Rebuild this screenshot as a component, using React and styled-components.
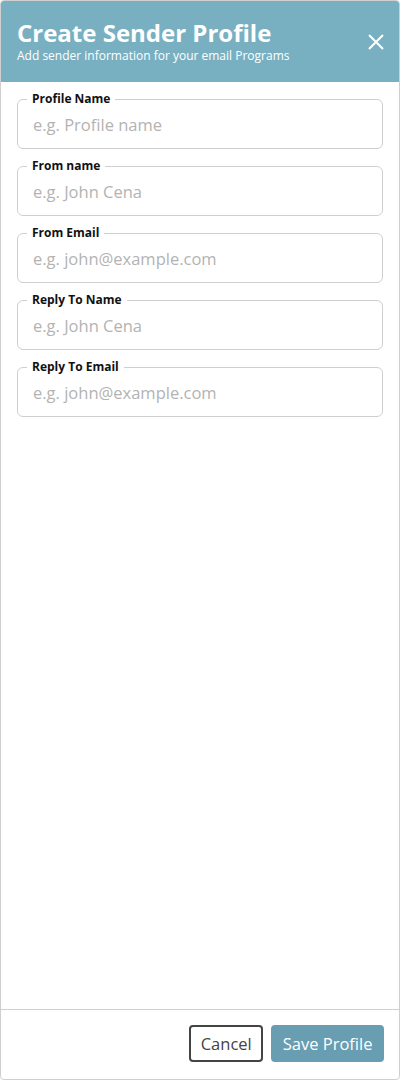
import React from "react";
import styled, { createGlobalStyle } from "styled-components";

const fields = [
  { label: "Profile Name", placeholder: "e.g. Profile name" },
  { label: "From name", placeholder: "e.g. John Cena" },
  { label: "From Email", placeholder: "e.g. john@example.com" },
  { label: "Reply To Name", placeholder: "e.g. John Cena" },
  { label: "Reply To Email", placeholder: "e.g. john@example.com" },
];

function App() {
  return (
    <>
      <GlobalStyle />
      <Panel>
        <Header>
          <div>
            <Title>Create Sender Profile</Title>
            <Subtitle>Add sender information for your email Programs</Subtitle>
          </div>
          <CloseButton aria-label="Close">
            <svg width="16" height="16" viewBox="0 0 16 16">
              <path d="M1 1L15 15M15 1L1 15" stroke="#fff" strokeWidth="2" />
            </svg>
          </CloseButton>
        </Header>
        <Body>
          {fields.map((item) => (
            <Field key={item.label}>
              <Legend>{item.label}</Legend>
              <Input placeholder={item.placeholder} />
            </Field>
          ))}
        </Body>
        <Footer>
          <Button>Cancel</Button>
          <Button $primary>Save Profile</Button>
        </Footer>
      </Panel>
    </>
  );
}

const GlobalStyle = createGlobalStyle`
  * {
    box-sizing: border-box;
  }
  body {
    margin: 0;
    font-family: "Open Sans", "Liberation Sans", sans-serif;
    background: #fff;
  }
`;

const Panel = styled.div`
  width: 400px;
  height: 1080px;
  display: flex;
  flex-direction: column;
  border: 1px solid #cfcfcf;
  border-radius: 4px;
  overflow: hidden;
  background: #fff;
`;

const Header = styled.div`
  display: flex;
  justify-content: space-between;
  align-items: center;
  height: 81px;
  padding: 0 15px 2px 16px;
  background-color: #78b0c2;
  color: #fff;
`;

const Title = styled.h1`
  margin: 0;
  font-size: 24px;
  font-weight: 700;
  line-height: 30px;
`;

const Subtitle = styled.p`
  margin: 0;
  font-size: 12px;
  line-height: 16px;
`;

const CloseButton = styled.button`
  display: flex;
  margin-top: 3px;
  padding: 0;
  border: none;
  background: none;
  cursor: pointer;
`;

const Body = styled.div`
  flex: 1;
  display: flex;
  flex-direction: column;
  gap: 9px;
  padding: 9px 16px;
`;

const Field = styled.fieldset`
  margin: 0;
  padding: 0 9px 7px;
  border: 1px solid #cfcfcf;
  border-radius: 6px;
  min-width: 0;
`;

const Legend = styled.legend`
  padding: 0 5px;
  font-size: 12px;
  font-weight: 700;
  line-height: 16px;
  color: #111;
`;

const Input = styled.input`
  display: block;
  width: 100%;
  height: 34px;
  padding: 0 6px;
  border: none;
  outline: none;
  font-family: inherit;
  font-size: 16.5px;
  color: #333;
  &::placeholder {
    color: #b3b3b3;
  }
`;

const Footer = styled.div`
  display: flex;
  justify-content: flex-end;
  gap: 8px;
  height: 70px;
  padding: 15px 15px 0;
  border-top: 1px solid #cfcfcf;
`;

const Button = styled.button`
  height: 37px;
  padding: 0 ${(p) => (p.$primary ? "9.5px" : "9.5px")};
  border: ${(p) => (p.$primary ? "2px solid #689db2" : "2px solid #444")};
  border-radius: 4px;
  background-color: ${(p) => (p.$primary ? "#689db2" : "#fff")};
  color: ${(p) => (p.$primary ? "#fff" : "#444")};
  font-family: inherit;
  font-size: 16.5px;
  cursor: pointer;
`;

export default App;
